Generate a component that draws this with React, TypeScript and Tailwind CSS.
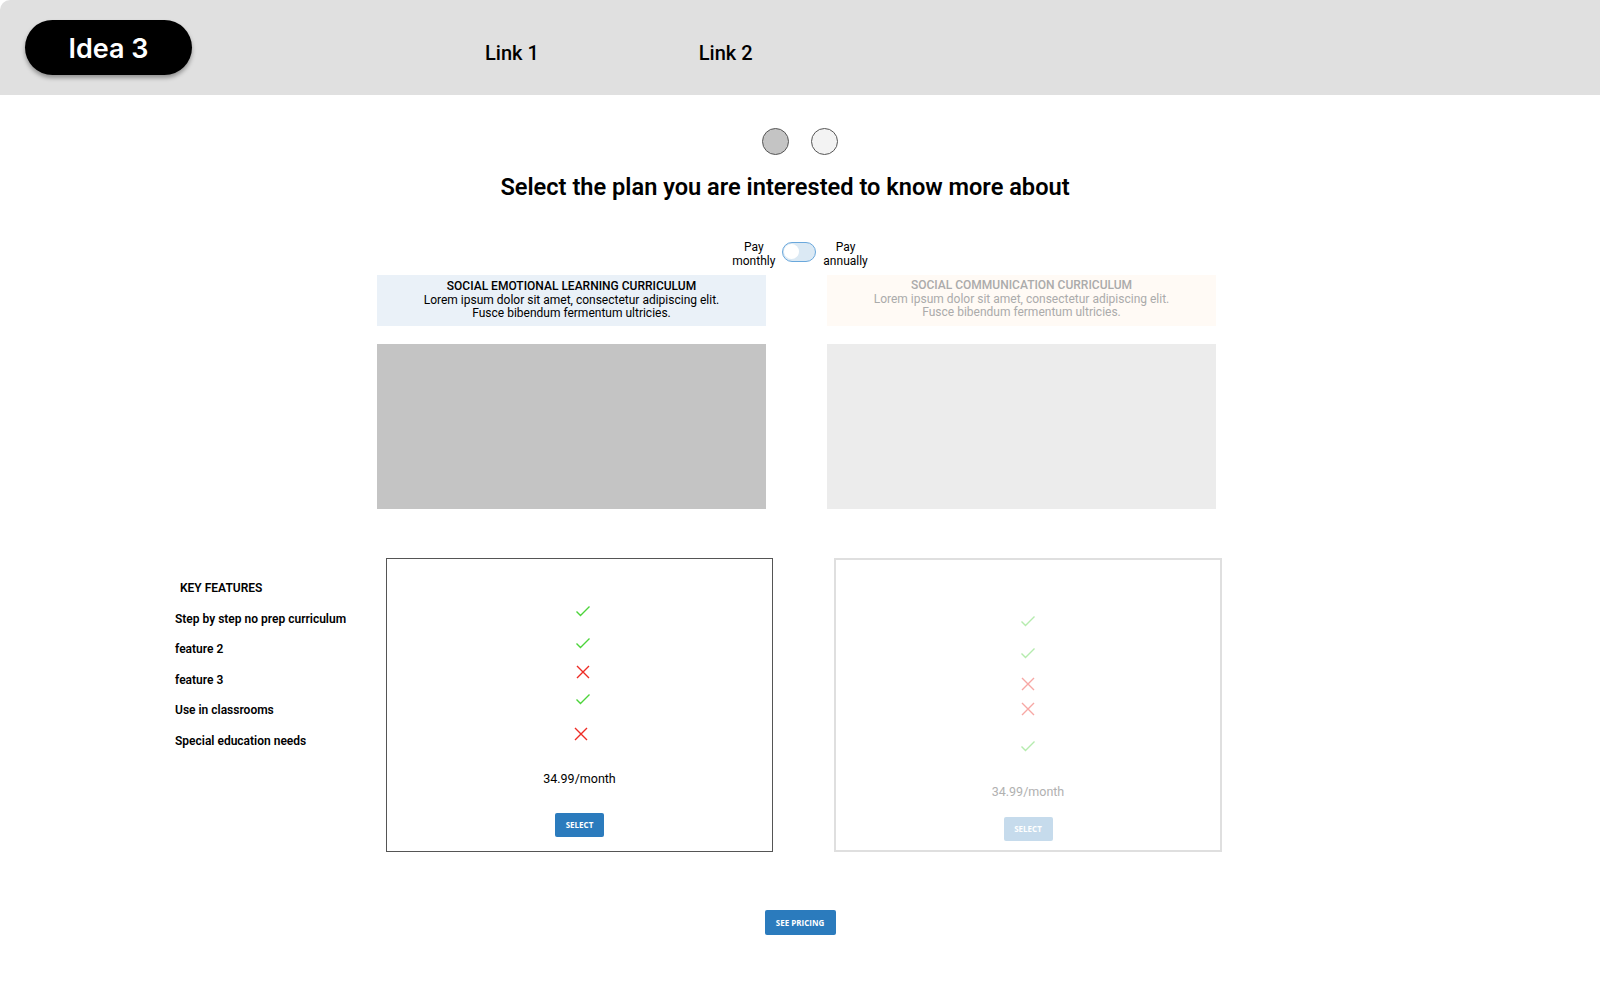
import React, { useState } from 'react'

type Mark = 'yes' | 'no'

const features = [
  'Step by step no prep curriculum',
  'feature 2',
  'feature 3',
  'Use in classrooms',
  'Special education needs',
]

const Check = () => (
  <svg width="16" height="16" viewBox="0 0 16 16" fill="none">
    <polyline points="1.5,8.5 5.5,12.5 14.5,3.5" stroke="#4cd43a" strokeWidth="1.4" />
  </svg>
)

const Cross = () => (
  <svg width="16" height="16" viewBox="0 0 16 16" fill="none">
    <path d="M2 2 L14 14 M14 2 L2 14" stroke="#ee2b24" strokeWidth="1.4" />
  </svg>
)

const Icon = ({ mark }: { mark: Mark }) => (mark === 'yes' ? <Check /> : <Cross />)

export default function App() {
  const [annual, setAnnual] = useState(false)

  return (
    <div className="min-h-[985px] bg-white font-['Roboto','Liberation_Sans',sans-serif] text-black">
      {/* top bar */}
      <header className="flex h-[95px] items-center rounded-tl-[10px] bg-[#e0e0e0]">
        <div className="ml-[25px] flex h-[55px] w-[167px] items-center justify-center rounded-full bg-black pt-[3px] shadow-[0_3px_4px_rgba(0,0,0,0.35)]">
          <span className="font-['Inter',sans-serif] text-[27px] font-semibold text-white">Idea 3</span>
        </div>
        <nav className="ml-[293px] mt-[10px] flex gap-[160px] text-[20px] font-medium">
          <a href="#">Link 1</a>
          <a href="#">Link 2</a>
        </nav>
      </header>

      {/* step dots + title */}
      <section className="flex flex-col items-center">
        <div className="mt-[33px] flex gap-[22px]">
          <span className="h-[27px] w-[27px] rounded-full border border-[#555] bg-[#c4c4c4]" />
          <span className="h-[27px] w-[27px] rounded-full border border-[#555] bg-[#f3f3f3]" />
        </div>
        <h1 className="mr-[30px] mt-[16px] text-[23.6px] font-semibold leading-[32px]">
          Select the plan you are interested to know more about
        </h1>
        <div className="mt-[38px] flex items-center gap-[7px] text-[12px] leading-[13.5px]">
          <span className="text-center">Pay<br />monthly</span>
          <button
            onClick={() => setAnnual(!annual)}
            className="relative mb-[6px] h-[20px] w-[34px] rounded-full border-[1.5px] border-[#6aa8dc] bg-[#dbe9f4]"
          >
            <span
              className={
                annual
                  ? 'absolute right-[1px] top-[1px] h-[15px] w-[15px] rounded-full bg-white'
                  : 'absolute left-[1px] top-[1px] h-[15px] w-[15px] rounded-full bg-white'
              }
            />
          </button>
          <span className="text-center">Pay<br />annually</span>
        </div>
      </section>

      {/* curriculum headers */}
      <section className="mt-[7px] flex gap-[61px] pl-[377px]">
        <div className="w-[389px]">
          <div className="flex h-[51px] flex-col items-center justify-center bg-[#eaf1f8] text-center text-[12px] leading-[13.5px]">
            <div className="font-medium">SOCIAL EMOTIONAL LEARNING CURRICULUM</div>
            <div>Lorem ipsum dolor sit amet, consectetur adipiscing elit.</div>
            <div>Fusce bibendum fermentum ultricies.</div>
          </div>
          <div className="mt-[18px] h-[165px] bg-[#c4c4c4]" />
        </div>
        <div className="w-[389px]">
          <div className="flex h-[51px] flex-col items-center justify-center bg-[#fffaf5] pb-[2px] text-center text-[12px] leading-[13.5px] text-[#ababab]">
            <div className="font-medium">SOCIAL COMMUNICATION CURRICULUM</div>
            <div>Lorem ipsum dolor sit amet, consectetur adipiscing elit.</div>
            <div>Fusce bibendum fermentum ultricies.</div>
          </div>
          <div className="mt-[18px] h-[165px] bg-[#ececec]" />
        </div>
      </section>

      {/* features comparison */}
      <section className="mt-[49px] flex pl-[175px]">
        <div className="w-[211px] pt-[22px] text-[12px] font-semibold leading-[16px]">
          <div className="ml-[5px]">KEY FEATURES</div>
          {features.map((f) => (
            <div key={f} className="mt-[14.5px]">{f}</div>
          ))}
        </div>

        <div className="flex h-[294px] w-[387px] flex-col items-center border border-[#555]">
          <div className="ml-[7px] flex flex-col items-center pt-[44px]">
            <Icon mark="yes" />
            <div className="mt-[16px]"><Icon mark="yes" /></div>
            <div className="mt-[13px]"><Icon mark="no" /></div>
            <div className="mt-[11px]"><Icon mark="yes" /></div>
            <div className="-ml-[5px] mt-[19px]"><Icon mark="no" /></div>
          </div>
          <div className="mt-[29px] text-[12.5px] leading-[16px]">34.99/month</div>
          <button className="mt-[26px] flex h-[24px] w-[49px] items-center justify-center rounded-[2px] bg-[#2b7bbd] font-['Open_Sans',sans-serif] text-[8px] font-bold text-white">
            SELECT
          </button>
        </div>

        <div className="ml-[61px] flex h-[294px] w-[388px] flex-col items-center border-2 border-[#dcdcdc] opacity-90">
          <div className="flex flex-col items-center pt-[53px] opacity-45">
            <Icon mark="yes" />
            <div className="mt-[16px]"><Icon mark="yes" /></div>
            <div className="mt-[15px]"><Icon mark="no" /></div>
            <div className="mt-[9px]"><Icon mark="no" /></div>
            <div className="mt-[21px]"><Icon mark="yes" /></div>
          </div>
          <div className="mt-[30px] text-[12.5px] leading-[16px] text-[#a9a9a9]">34.99/month</div>
          <button className="mt-[17px] flex h-[24px] w-[49px] items-center justify-center rounded-[2px] bg-[#c0d8ea] font-['Open_Sans',sans-serif] text-[8px] font-bold text-white">
            SELECT
          </button>
        </div>
      </section>

      {/* bottom cta */}
      <div className="mt-[58px] flex justify-center">
        <button className="h-[25px] w-[71px] rounded-[2px] bg-[#2b7bbd] font-['Open_Sans',sans-serif] text-[8px] font-bold text-white">
          SEE PRICING
        </button>
      </div>
    </div>
  )
}
